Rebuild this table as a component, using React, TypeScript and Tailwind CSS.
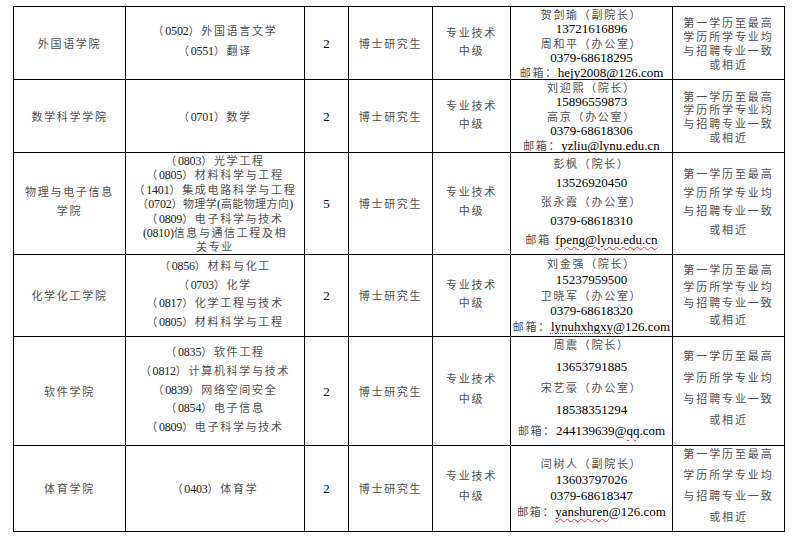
import React from "react";

const CJK = "text-[#505050] text-[11px] tracking-[1.7px]";
const CJK_TIGHT = "text-[#505050] text-[11px] tracking-[0.4px]";

function seg(s: string, latin: string, cjk: string = CJK) {
  return s
    .split(/([\x00-\x7F]+)/)
    .filter(Boolean)
    .map((p, i) =>
      /^[\x00-\x7F]+$/.test(p) ? (
        <span key={i} className={latin}>
          {p}
        </span>
      ) : (
        <span key={i} className={cjk}>
          {p}
        </span>
      )
    );
}

const BIG = "text-black text-[13px]";
const SMALL = "text-[#222] text-[12px] tracking-[-0.2px]";

type Line = React.ReactNode;

function Lines({ lines, h }: { lines: Line[]; h: string }) {
  return (
    <div className="flex flex-col items-center justify-center">
      {lines.map((l, i) => (
        <div key={i} className={`${h} whitespace-nowrap text-center leading-[14px]`}>
          {l}
        </div>
      ))}
    </div>
  );
}

const Email = ({
  label,
  user,
  rest,
  deco,
}: {
  label: string;
  user: string;
  rest: string;
  deco?: "wavy" | "dotted" | "none";
}) => {
  const cls =
    deco === "wavy"
      ? "underline decoration-wavy decoration-red-500 decoration-[1px] underline-offset-2"
      : deco === "dotted"
      ? "underline decoration-dotted decoration-red-500 decoration-[1px] underline-offset-2"
      : "";
  return (
    <>
      <span className={CJK}>{label}</span>
      <span className={`${BIG} ${cls}`}>{user}</span>
      <span className={BIG}>{rest}</span>
    </>
  );
};

const td = "border border-black p-0 align-middle text-center";

const cond = (h: string) => (
  <Lines
    h={h}
    lines={["第一学历至最高", "学历所学专业均", "与招聘专业一致", "或相近"].map((s) =>
      seg(s, BIG, "text-[#505050] text-[11px] tracking-[1.9px]")
    )}
  />
);

const tech = (h: string) => <Lines h={h} lines={["专业技术", "中级"].map((s) => seg(s, BIG))} />;

const phd = <span className={CJK}>博士研究生</span>;

export default function App() {
  return (
    <div className="w-[800px] h-[536px] bg-white pt-[6px] pl-[13px] font-['Liberation_Serif','Noto_Sans_CJK_SC',serif]">
      <table className="border-collapse table-fixed w-[771px]">
        <colgroup>
          <col className="w-[112px]" />
          <col className="w-[179px]" />
          <col className="w-[44px]" />
          <col className="w-[84px]" />
          <col className="w-[78px]" />
          <col className="w-[162px]" />
          <col className="w-[112px]" />
        </colgroup>
        <tbody>
          {/* Row 1 */}
          <tr className="h-[73px]">
            <td className={td}>
              <span className={CJK}>外国语学院</span>
            </td>
            <td className={td}>
              <Lines h="h-[20px]" lines={["（0502）外国语言文学", "（0551）翻译"].map((s) => seg(s, SMALL))} />
            </td>
            <td className={td}>
              <span className={BIG}>2</span>
            </td>
            <td className={td}>{phd}</td>
            <td className={td}>{tech("h-[18px]")}</td>
            <td className={td}>
              <Lines
                h="h-[14.4px]"
                lines={[
                  seg("贺剑瑜（副院长）", BIG),
                  seg("13721616896", BIG),
                  seg("周和平（办公室）", BIG),
                  seg("0379-68618295", BIG),
                  <Email label="邮箱：" user="hejy2008@126.com" rest="" />,
                ]}
              />
            </td>
            <td className={td}>{cond("h-[14px]")}</td>
          </tr>
          {/* Row 2 */}
          <tr className="h-[72px]">
            <td className={td}>
              <span className={CJK}>数学科学学院</span>
            </td>
            <td className={td}>{seg("（0701）数学", SMALL)}</td>
            <td className={td}>
              <span className={BIG}>2</span>
            </td>
            <td className={td}>{phd}</td>
            <td className={td}>{tech("h-[18px]")}</td>
            <td className={td}>
              <Lines
                h="h-[14.4px]"
                lines={[
                  seg("刘迎熙（院长）", BIG),
                  seg("15896559873", BIG),
                  seg("高京（办公室）", BIG),
                  seg("0379-68618306", BIG),
                  <Email label="邮箱：" user="yzliu@lynu.edu.cn" rest="" />,
                ]}
              />
            </td>
            <td className={td}>{cond("h-[13.7px]")}</td>
          </tr>
          {/* Row 3 */}
          <tr className="h-[102px]">
            <td className={td}>
              <Lines h="h-[19px]" lines={["物理与电子信息", "学院"].map((s) => seg(s, BIG))} />
            </td>
            <td className={td}>
              <Lines
                h="h-[14.4px]"
                lines={[
                  seg("（0803）光学工程", SMALL),
                  seg("（0805）材料科学与工程", SMALL),
                  seg("（1401）集成电路科学与工程", SMALL),
                  seg("（0702）物理学(高能物理方向)", SMALL, CJK_TIGHT),
                  seg("（0809）电子科学与技术", SMALL),
                  seg("(0810)信息与通信工程及相", SMALL, "text-[#505050] text-[11px] tracking-[1.6px]"),
                  seg("关专业", SMALL),
                ]}
              />
            </td>
            <td className={td}>
              <span className={BIG}>5</span>
            </td>
            <td className={td}>{phd}</td>
            <td className={td}>{tech("h-[19px]")}</td>
            <td className={td}>
              <Lines
                h="h-[19px]"
                lines={[
                  seg("彭枫（院长）", BIG),
                  seg("13526920450", BIG),
                  seg("张永霞（办公室）", BIG),
                  seg("0379-68618310", BIG),
                  <Email label="邮箱 " user="fpeng@lynu.edu.cn" rest="" deco="wavy" />,
                ]}
              />
            </td>
            <td className={td}>{cond("h-[18.7px]")}</td>
          </tr>
          {/* Row 4 */}
          <tr className="h-[82px]">
            <td className={td}>
              <span className={CJK}>化学化工学院</span>
            </td>
            <td className={td}>
              <Lines
                h="h-[18.7px]"
                lines={[
                  seg("（0856）材料与化工", SMALL),
                  seg("（0703）化学", SMALL),
                  seg("（0817）化学工程与技术", SMALL),
                  seg("（0805）材料科学与工程", SMALL),
                ]}
              />
            </td>
            <td className={td}>
              <span className={BIG}>2</span>
            </td>
            <td className={td}>{phd}</td>
            <td className={td}>{tech("h-[18px]")}</td>
            <td className={td}>
              <Lines
                h="h-[15.8px]"
                lines={[
                  seg("刘金强（院长）", BIG),
                  seg("15237959500", BIG),
                  seg("卫晓军（办公室）", BIG),
                  seg("0379-68618320", BIG),
                  <Email label="邮箱：" user="lynuhxhgxy" rest="@126.com" deco="dotted" />,
                ]}
              />
            </td>
            <td className={td}>{cond("h-[16.9px]")}</td>
          </tr>
          {/* Row 5 */}
          <tr className="h-[109px]">
            <td className={td}>
              <span className={CJK}>软件学院</span>
            </td>
            <td className={td}>
              <Lines
                h="h-[18.8px]"
                lines={[
                  seg("（0835）软件工程", SMALL),
                  seg("（0812）计算机科学与技术", SMALL),
                  seg("（0839）网络空间安全", SMALL),
                  seg("（0854）电子信息", SMALL),
                  seg("（0809）电子科学与技术", SMALL),
                ]}
              />
            </td>
            <td className={td}>
              <span className={BIG}>2</span>
            </td>
            <td className={td}>{phd}</td>
            <td className={td}>{tech("h-[20px]")}</td>
            <td className={td}>
              <Lines
                h="h-[21.4px]"
                lines={[
                  seg("周震（院长）", BIG),
                  seg("13653791885", BIG),
                  seg("宋艺豪（办公室）", BIG),
                  seg("18538351294", BIG),
                  <>
                    <span className={CJK}>邮箱：</span>
                    <span className={BIG}>244139639@</span>
                    <span
                      className={`${BIG} underline decoration-wavy decoration-red-500 decoration-[1px] underline-offset-2`}
                    >
                      qq
                    </span>
                    <span className={BIG}>.com</span>
                  </>,
                ]}
              />
            </td>
            <td className={td}>{cond("h-[21.3px]")}</td>
          </tr>
          {/* Row 6 */}
          <tr className="h-[86px]">
            <td className={td}>
              <span className={CJK}>体育学院</span>
            </td>
            <td className={td}>{seg("（0403）体育学", SMALL)}</td>
            <td className={td}>
              <span className={BIG}>2</span>
            </td>
            <td className={td}>{phd}</td>
            <td className={td}>{tech("h-[20px]")}</td>
            <td className={td}>
              <Lines
                h="h-[16px]"
                lines={[
                  seg("闫树人（副院长）", BIG),
                  seg("13603797026", BIG),
                  seg("0379-68618347", BIG),
                  <Email label="邮箱：" user="yanshuren" rest="@126.com" deco="wavy" />,
                ]}
              />
            </td>
            <td className={td}>{cond("h-[21px]")}</td>
          </tr>
        </tbody>
      </table>
    </div>
  );
}
